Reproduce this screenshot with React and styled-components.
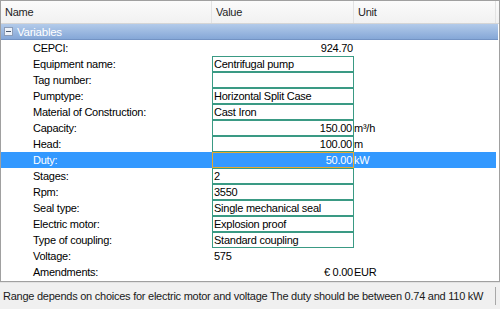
import React from "react";
import styled, { createGlobalStyle, css } from "styled-components";

const GlobalStyle = createGlobalStyle`
  html, body { margin: 0; padding: 0; background: #ffffff; }
  body {
    font-family: "Liberation Sans", Arial, sans-serif;
    font-size: 11px;
    color: #000;
  }
`;

const Window = styled.div`
  width: 500px;
  height: 309px;
  display: flex;
  flex-direction: column;
  background: #f0f0f0;
  overflow: hidden;
  letter-spacing: -0.25px;
`;

const Grid = styled.div`
  height: 282px;
  box-sizing: border-box;
  border: 1px solid #a0a0a0;
  background: #ffffff;
  display: flex;
  flex-direction: column;
  overflow: hidden;
`;

const cols = css`
  display: grid;
  grid-template-columns: 211px 142px 142px;
`;

const HeaderRow = styled.div`
  ${cols}
  height: 22px;
  background: linear-gradient(#fbfbfb, #f1f1f1);
  border-bottom: 1px solid #d5d5d5;
`;

const HeaderCell = styled.div`
  display: flex;
  align-items: center;
  padding-left: 4px;
  border-right: 1px solid #e3e3e3;
  color: #1e1e1e;
`;

const GroupRow = styled.div`
  width: 497px;
  height: 16px;
  display: flex;
  align-items: center;
  gap: 4px;
  padding-left: 3px;
  box-sizing: border-box;
  background: linear-gradient(#b3cbea, #85a7d7);
  border-bottom: 1px solid #7393c4;
  color: #ffffff;
  font-size: 11.5px;
`;

const Rows = styled.div`
  display: flex;
  flex-direction: column;
`;

const PropRow = styled.div`
  ${cols}
  width: 495px;
  height: 16px;
  align-items: stretch;
  background: ${(p) => (p.$selected ? "#3399ff" : "transparent")};
  color: ${(p) => (p.$selected ? "#ffffff" : "#000")};
`;

const Label = styled.div`
  display: flex;
  align-items: center;
  padding-left: 32px;
  white-space: nowrap;
`;

const Plain = styled.div`
  display: flex;
  align-items: center;
  justify-content: ${(p) => (p.$right ? "flex-end" : "flex-start")};
  padding: 0 1px 0 2px;
  white-space: nowrap;
`;

const Editor = styled.div`
  display: flex;
  align-items: center;
  justify-content: ${(p) => (p.$right ? "flex-end" : "flex-start")};
  box-sizing: border-box;
  border: 1px solid ${(p) => (p.$focused ? "#e8a92a" : "#3a9a84")};
  padding: 0 1px;
  white-space: nowrap;
  overflow: hidden;
`;

const Unit = styled.div`
  display: flex;
  align-items: center;
  white-space: nowrap;
`;

const StatusBar = styled.div`
  flex: 1;
  display: flex;
  align-items: center;
  padding: 3px 4px 3px 3px;
  border-top: 1px solid #e2e2e2;
`;

const StatusText = styled.div`
  flex: 1;
  height: 18px;
  display: flex;
  align-items: center;
  border-right: 1px solid #a8a8a8;
  color: #1a1a1a;
  white-space: nowrap;
`;

const MinusIcon = () => (
  <svg width="9" height="9" viewBox="0 0 9 9">
    <rect x="0.5" y="0.5" width="8" height="8" fill="#eef3fa" stroke="#8c9db8" />
    <rect x="2" y="4" width="5" height="1" fill="#4a5a70" />
  </svg>
);

const rows = [
  { label: "CEPCI:", value: "924.70", kind: "plain", right: true },
  { label: "Equipment name:", value: "Centrifugal pump", kind: "edit" },
  { label: "Tag number:", value: "", kind: "edit" },
  { label: "Pumptype:", value: "Horizontal Split Case", kind: "edit" },
  { label: "Material of Construction:", value: "Cast Iron", kind: "edit" },
  { label: "Capacity:", value: "150.00", kind: "edit", right: true, unit: "m³/h" },
  { label: "Head:", value: "100.00", kind: "edit", right: true, unit: "m" },
  { label: "Duty:", value: "50.00", kind: "edit", right: true, unit: "kW", selected: true },
  { label: "Stages:", value: "2", kind: "edit" },
  { label: "Rpm:", value: "3550", kind: "edit" },
  { label: "Seal type:", value: "Single mechanical seal", kind: "edit" },
  { label: "Electric motor:", value: "Explosion proof", kind: "edit" },
  { label: "Type of coupling:", value: "Standard coupling", kind: "edit" },
  { label: "Voltage:", value: "575", kind: "plain" },
  { label: "Amendments:", value: "€ 0.00", kind: "plain", right: true, unit: "EUR" },
];

export default function App() {
  return (
    <>
      <GlobalStyle />
      <Window>
        <Grid>
          <HeaderRow>
            <HeaderCell>Name</HeaderCell>
            <HeaderCell>Value</HeaderCell>
            <HeaderCell>Unit</HeaderCell>
          </HeaderRow>
          <GroupRow>
            <MinusIcon />
            <span>Variables</span>
          </GroupRow>
          <Rows>
            {rows.map((r) => (
              <PropRow key={r.label} $selected={r.selected}>
                <Label>{r.label}</Label>
                {r.kind === "edit" ? (
                  <Editor $right={r.right} $focused={r.selected}>
                    {r.value}
                  </Editor>
                ) : (
                  <Plain $right={r.right}>{r.value}</Plain>
                )}
                <Unit>{r.unit || ""}</Unit>
              </PropRow>
            ))}
          </Rows>
        </Grid>
        <StatusBar>
          <StatusText>
            Range depends on choices for electric motor and voltage The duty should be between 0.74 and 110 kW
          </StatusText>
        </StatusBar>
      </Window>
    </>
  );
}
